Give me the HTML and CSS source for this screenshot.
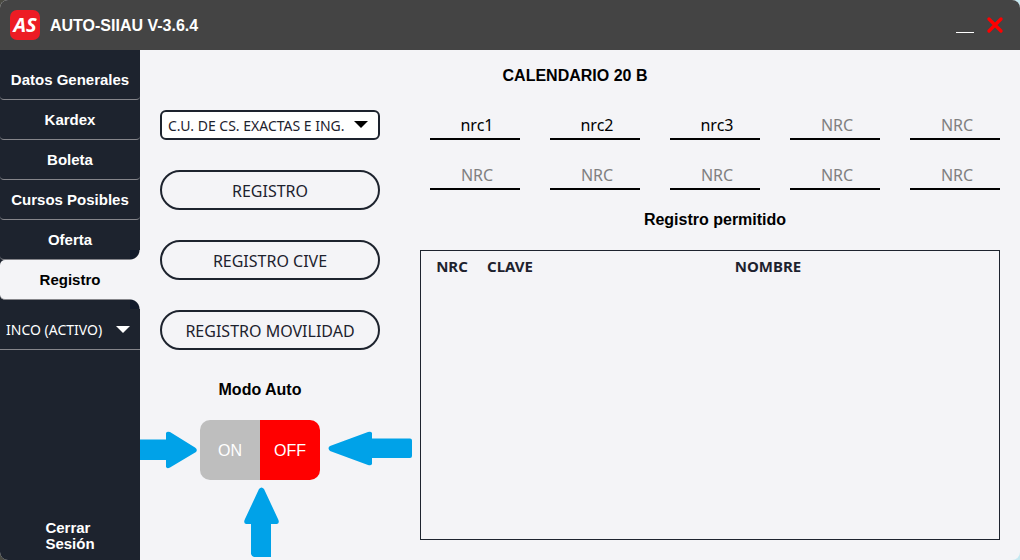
FILE: index.html
```
<!DOCTYPE html>
<html lang="es">
<head>
<meta charset="utf-8">
<meta name="viewport" content="width=device-width, initial-scale=1">
<title>AUTO-SIIAU V-3.6.4</title>
<link rel="stylesheet" href="styles.css">
</head>
<body>
<div class="window">
  <header class="titlebar">
    <span class="logo">AS</span>
    <h1 class="app-name">AUTO-SIIAU V-3.6.4</h1>
    <button class="window-button" type="button" aria-label="Minimizar">
      <svg width="20" height="20" viewBox="0 0 20 20"><path d="M1 17.500h18" stroke="#fff" stroke-width="1"/></svg>
    </button>
    <button class="window-button" type="button" aria-label="Cerrar">
      <svg width="20" height="20" viewBox="0 0 20 20"><path d="M4 4l12 12M16 4L4 16" stroke="#f00" stroke-width="3.4" stroke-linecap="round"/></svg>
    </button>
  </header>
  <div class="body">
    <nav class="sidebar">
      <a class="tab" href="#datos">Datos Generales</a>
      <a class="tab" href="#kardex">Kardex</a>
      <a class="tab" href="#boleta">Boleta</a>
      <a class="tab" href="#cursos">Cursos Posibles</a>
      <a class="tab" href="#oferta">Oferta</a>
      <a class="tab tab-active" href="#registro" aria-current="page">Registro</a>
      <div class="career">
        <select class="career-select" aria-label="Carrera"><option>INCO (ACTIVO)</option></select>
        <svg class="caret career-caret" viewBox="0 0 14 7"><path d="M0 0h14L7 7z"/></svg>
      </div>
      <button class="logout" type="button">Cerrar<br>Sesión</button>
    </nav>
    <main class="content">
      <h2 class="heading calendar">CALENDARIO 20 B</h2>
      <section class="actions">
        <div class="campus">
          <select class="campus-select" aria-label="Centro universitario"><option>C.U. DE CS. EXACTAS E ING.</option></select>
          <svg class="caret campus-caret" viewBox="0 0 14 7"><path d="M0 0h14L7 7z"/></svg>
        </div>
        <button class="pill" type="button">REGISTRO</button>
        <button class="pill" type="button">REGISTRO CIVE</button>
        <button class="pill" type="button">REGISTRO MOVILIDAD</button>
        <h2 class="heading" id="modo">Modo Auto</h2>
        <div class="switch" role="group" aria-labelledby="modo">
          <button class="switch-half" type="button" aria-pressed="false">ON</button>
          <button class="switch-half switch-off" type="button" aria-pressed="true">OFF</button>
          <svg class="arrow arrow-left" width="57" height="38" viewBox="0 0 57 38"><path d="M0 8.500H26V2Q27 0 30 1L55 16.500Q58 18.500 56 21L30 36.500Q27 38 26 36V29H0z"/></svg>
          <svg class="arrow arrow-right" width="84" height="35" viewBox="0 0 84 35"><path d="M82 7.500H44V2Q43 0 40 1L2 15Q-1 17 2 20L40 34Q43 35 44 33V27H82Q84 27 84 25V9.500Q84 7.500 82 7.500z"/></svg>
          <svg class="arrow arrow-up" width="35" height="70" viewBox="0 0 35 70"><path d="M7 67V37H2Q-1 36 1 32L15 2Q17.500-1 20 2L34 32Q36 36 33 37H27V70H10Q8 70 7 67z"/></svg>
        </div>
      </section>
      <section class="registration">
        <div class="nrc-grid">
          <input class="nrc" type="text" aria-label="NRC 1" placeholder="NRC" value="nrc1">
          <input class="nrc" type="text" aria-label="NRC 2" placeholder="NRC" value="nrc2">
          <input class="nrc" type="text" aria-label="NRC 3" placeholder="NRC" value="nrc3">
          <input class="nrc" type="text" aria-label="NRC 4" placeholder="NRC">
          <input class="nrc" type="text" aria-label="NRC 5" placeholder="NRC">
          <input class="nrc" type="text" aria-label="NRC 6" placeholder="NRC">
          <input class="nrc" type="text" aria-label="NRC 7" placeholder="NRC">
          <input class="nrc" type="text" aria-label="NRC 8" placeholder="NRC">
          <input class="nrc" type="text" aria-label="NRC 9" placeholder="NRC">
          <input class="nrc" type="text" aria-label="NRC 10" placeholder="NRC">
        </div>
        <h2 class="heading allowed">Registro permitido</h2>
        <div class="table-box">
          <table class="courses">
            <thead><tr><th class="col-nrc" scope="col">NRC</th><th class="col-key" scope="col">CLAVE</th><th scope="col">NOMBRE</th></tr></thead>
            <tbody></tbody>
          </table>
        </div>
      </section>
    </main>
  </div>
</div>
</body>
</html>
```
FILE: styles.css
```
* {
  box-sizing: border-box;
}

html {
  background: linear-gradient(135deg, #4a4a42 0 50%, #c5e8f0 50%);
}

body {
  margin: 0;
  font-family: "Noto Sans", sans-serif;
  font-size: 16px;
  color: #1d222e;
}

button,
select,
input {
  margin: 0;
  padding: 0;
  border: 0;
  background: none;
  color: inherit;
  font-family: inherit;
  font-size: 16px;
}

button {
  cursor: pointer;
}

select {
  appearance: none;
}

.window {
  display: flex;
  flex-direction: column;
  min-height: 100vh;
  border-radius: 8px;
  overflow: hidden;
  background: #f4f4f7;
}

.titlebar {
  display: flex;
  align-items: center;
  gap: 10px;
  height: 50px;
  padding: 0 15px 0 10px;
  background: #444;
  color: #fff;
}

.logo {
  width: 30px;
  height: 30px;
  border-radius: 7px;
  background: #ed1c24;
  font-size: 20px;
  font-style: italic;
  font-weight: 700;
  line-height: 30px;
  text-align: center;
}

.app-name {
  flex: 1;
  margin: 0;
  padding-top: 2px;
  font-family: "Liberation Sans", sans-serif;
  font-size: 16px;
}

.window-button {
  display: flex;
}

.body {
  flex: 1;
  display: flex;
}

.sidebar {
  display: flex;
  flex-direction: column;
  width: 140px;
  padding-top: 10px;
  background: #1d232e;
  color: #fff;
  font-family: "Liberation Sans", sans-serif;
}

.tab {
  position: relative;
  height: 40px;
  border-bottom: 1px solid #85858a;
  border-radius: 4px;
  color: #fff;
  font-size: 15px;
  font-weight: 700;
  line-height: 40px;
  text-align: center;
  text-decoration: none;
}

.tab-active {
  background: #f4f4f7;
  color: #000;
  border-radius: 5px 0 0 5px;
}

.tab-active::before,
.tab-active::after {
  content: "";
  position: absolute;
  right: 0;
  width: 10px;
  height: 10px;
}

.tab-active::before {
  bottom: 100%;
  background: radial-gradient(circle at 0 0, #111a2b 9px, #f4f4f7 10px);
}

.tab-active::after {
  top: 100%;
  background: radial-gradient(circle at 0 100%, #111a2b 9px, #f4f4f7 10px);
}

.career {
  position: relative;
  margin-top: 10px;
  border-bottom: 1px solid #85858a;
}

.career-select {
  width: 100%;
  height: 39px;
  padding-left: 6px;
  color: #fff;
  font-family: "Noto Sans", sans-serif;
  font-size: 14px;
}

.caret {
  position: absolute;
  top: 50%;
  width: 14px;
  height: 7px;
  margin-top: -4px;
  pointer-events: none;
}

.career-caret {
  right: 10px;
  fill: #fff;
}

.campus-caret {
  right: 12px;
  fill: #000;
}

.logout {
  align-self: center;
  margin-top: auto;
  margin-bottom: 8px;
  font-family: inherit;
  font-size: 15px;
  font-weight: 700;
  line-height: 16px;
  text-align: left;
}

.content {
  flex: 1;
  display: grid;
  grid-template-columns: 220px 1fr;
  grid-template-rows: 50px 1fr;
  column-gap: 40px;
  padding: 0 20px 20px;
}

.heading {
  margin: 0;
  color: #000;
  font-family: "Liberation Sans", sans-serif;
  font-size: 16px;
  line-height: 20px;
  text-align: center;
}

.calendar {
  grid-column: 1 / -1;
  padding-right: 10px;
  line-height: 52px;
}

.actions {
  display: flex;
  flex-direction: column;
  gap: 30px;
  padding-top: 10px;
}

.campus {
  position: relative;
}

.campus-select {
  display: block;
  width: 100%;
  height: 30px;
  padding-left: 6px;
  border: 2px solid #1d232e;
  border-radius: 6px;
  background: #fff;
  font-size: 14px;
}

.pill {
  height: 40px;
  padding-top: 2px;
  border: 2px solid #1d232e;
  border-radius: 20px;
}

.actions .heading {
  padding-right: 20px;
}

.switch {
  position: relative;
  display: flex;
  width: 120px;
  height: 60px;
  margin-top: -10px;
  margin-left: 40px;
}

.switch-half {
  flex: 1;
  padding-top: 2px;
  border-radius: 10px 0 0 10px;
  background: #bebebe;
  color: #fff;
  font-family: "Liberation Sans", sans-serif;
}

.switch-off {
  border-radius: 0 10px 10px 0;
  background: #f00;
}

.arrow {
  position: absolute;
  fill: #00a2e8;
  pointer-events: none;
}

.arrow-left {
  top: 11px;
  right: 100%;
  margin-right: 3px;
}

.arrow-right {
  top: 11px;
  left: 100%;
  margin-left: 8px;
}

.arrow-up {
  top: 100%;
  left: 44px;
  margin-top: 7px;
}

.registration {
  display: flex;
  flex-direction: column;
  gap: 20px;
  padding-top: 10px;
}

.nrc-grid {
  display: grid;
  grid-template-columns: repeat(5, 1fr);
  gap: 20px 30px;
  padding-left: 10px;
}

.nrc {
  width: 100%;
  height: 30px;
  padding: 2px 0 0 4px;
  border-bottom: 2px solid #000;
  color: #000;
  text-align: center;
}

.nrc::placeholder {
  color: #808080;
}

.allowed {
  padding-left: 10px;
}

.table-box {
  flex: 1;
  border: 1px solid #1d232e;
}

.courses {
  width: 100%;
  border-collapse: collapse;
  table-layout: fixed;
  font-size: 15px;
}

.courses th {
  height: 30px;
  padding: 0;
}

.courses .col-nrc {
  width: 62px;
}

.courses .col-key {
  width: 54px;
}
```
